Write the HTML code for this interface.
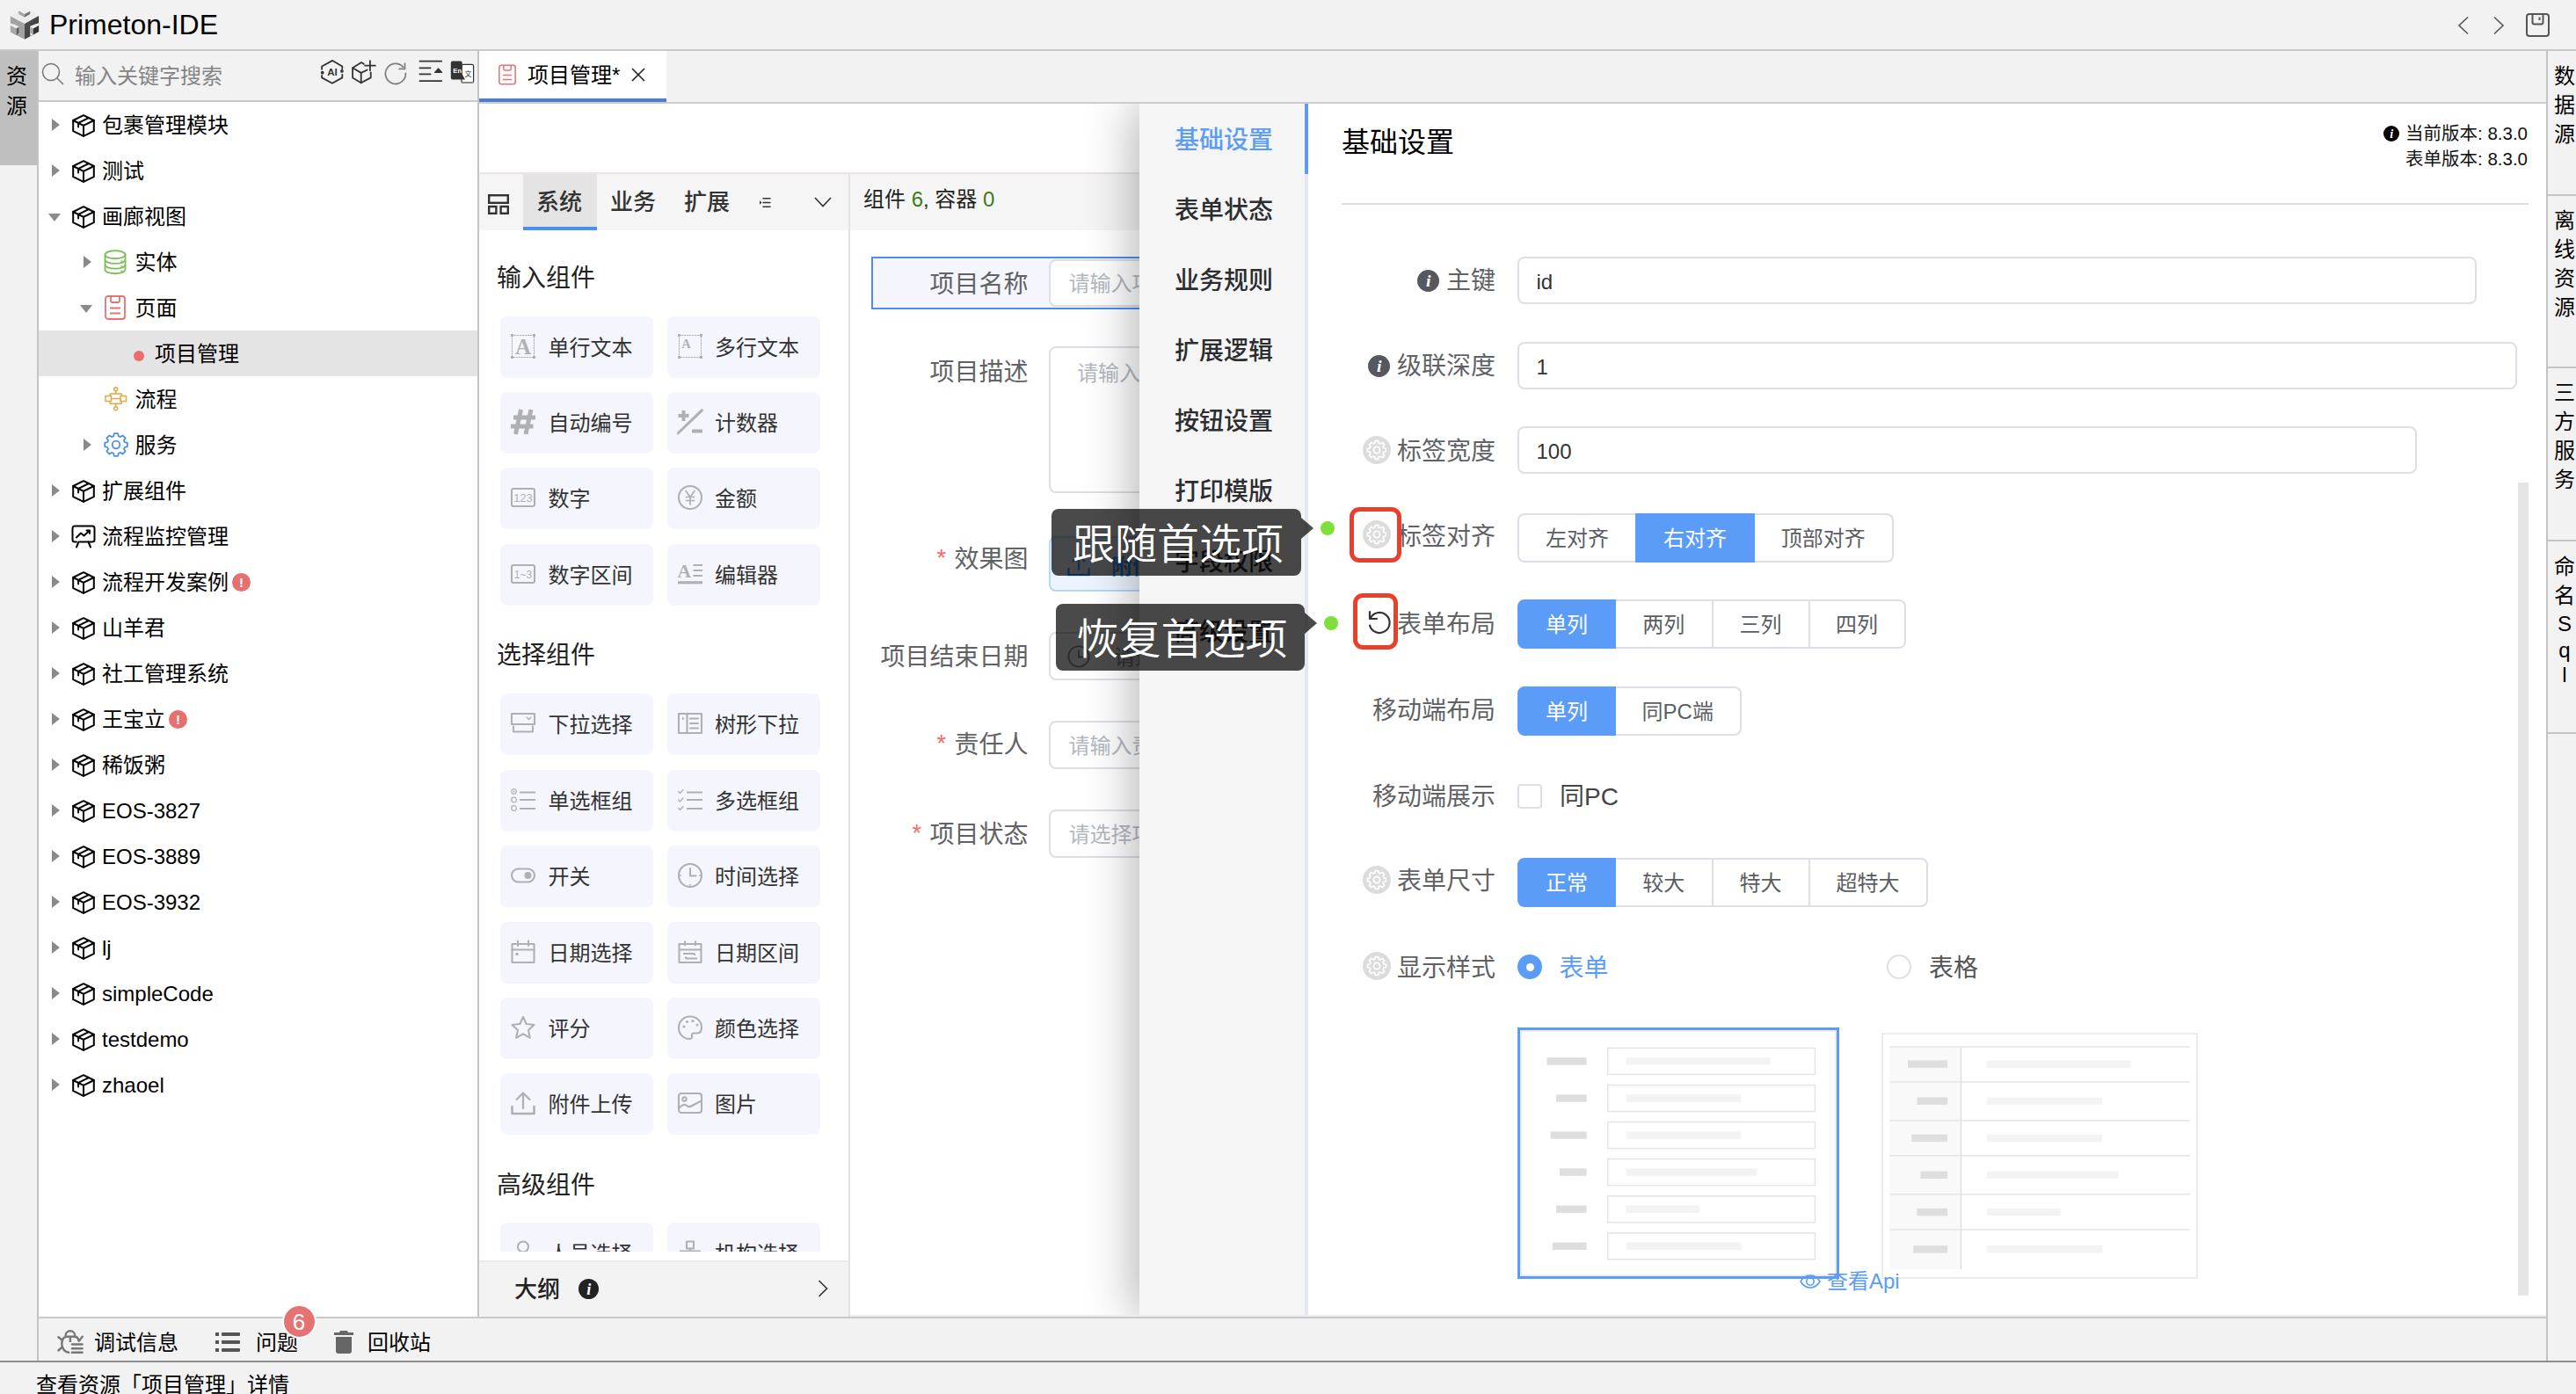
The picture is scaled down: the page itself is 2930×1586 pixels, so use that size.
<!DOCTYPE html>
<html lang="zh-CN"><head><meta charset="utf-8"><title>Primeton-IDE</title>
<style>
*{box-sizing:border-box;margin:0;padding:0}
html,body{width:2930px;height:1586px;overflow:hidden;background:#f2f2f2}
body{font-family:"Liberation Sans","Noto Sans CJK SC",sans-serif;color:#000;position:relative;font-size:24px}
.abs{position:absolute}
svg{display:block;overflow:visible}
.t{position:absolute;white-space:nowrap}
/* tree */
.row{position:absolute;left:44px;width:499px;height:52px}
.row.sel{background:#e4e4e4}
.row .tx{position:absolute;top:1px;line-height:52px;font-size:24px;white-space:nowrap}
.arr{position:absolute;width:0;height:0}
.arr.r{border-left:9px solid #8a8a8a;border-top:7px solid transparent;border-bottom:7px solid transparent;top:19px}
.arr.d{border-top:9px solid #8a8a8a;border-left:7px solid transparent;border-right:7px solid transparent;top:23px}
.ic{position:absolute}
.err{position:absolute;top:15.500px;width:21px;height:21px;border-radius:50%;background:#e5706e;color:#fff;font-size:15px;font-weight:bold;line-height:21px;text-align:center}
/* palette cards */
.card{position:absolute;width:174px;height:70px;background:#f5f6fd;border-radius:8px}
.card .tx{position:absolute;left:54.500px;top:1px;line-height:70px;font-size:24px;color:#333;white-space:nowrap}
.card svg{position:absolute;left:12px;top:20px}
.gh{position:absolute;left:566px;font-size:28px;line-height:40px;color:#222;white-space:nowrap}
/* canvas form */
.fl{position:absolute;font-size:28px;color:#606266;line-height:40px;white-space:nowrap;text-align:right;width:300px;left:869.500px}
.fl b{color:#f56c6c;font-weight:normal;margin-right:9.500px;font-size:27px;position:relative;top:-1.500px}
.fi{position:absolute;left:1193px;width:400px;border:2px solid #dcdfe6;border-radius:8px;background:#fff;font-size:24px;color:#b4b8bf;padding-left:20.500px;white-space:nowrap}
/* settings */
.nav{position:absolute;left:1298px;width:188px;text-align:center;font-size:28px;line-height:40px;color:#2c2d30;font-weight:500;white-space:nowrap}
.sl{position:absolute;font-size:28px;color:#606266;line-height:40px;white-space:nowrap;text-align:right;width:300px;left:1401px}
.si{position:absolute;left:1726px;height:54px;border:2px solid #dcdfe6;border-radius:8px;background:#fff;font-size:24px;line-height:54px;color:#333;padding-left:19.500px}
.rg{position:absolute;left:1726px;display:flex}
.rg div{height:55.500px;line-height:53.500px;font-size:24px;color:#5a5d63;text-align:center;border:2px solid #dcdfe6;border-left-width:0;background:#fff}
.rg div:first-child{border-left-width:2px;border-radius:8px 0 0 8px}
.rg div:last-child{border-radius:0 8px 8px 0}
.rg div.on{background:#5b9cf8;color:#fff;border-color:#5b9cf8;box-shadow:-2px 0 0 0 #5b9cf8}
.rg div.on:first-child{box-shadow:none}
.gear{position:absolute;width:32px;height:32px;border-radius:50%;background:#dcdcdc}
.tip{position:absolute;background:rgba(0,0,0,.71);color:#fff;font-size:48px;font-weight:350;border-radius:8px;white-space:nowrap;text-align:center;padding-left:4px}
.tip i{position:absolute;right:-14px;width:0;height:0;border-left:14px solid rgba(0,0,0,.71);border-top:12px solid transparent;border-bottom:12px solid transparent}
.dot{position:absolute;width:16px;height:16px;border-radius:50%;background:#7ee03c}
.rr{position:absolute;border:5px solid #e8402a;border-radius:11px}
/* right bar */
.rb{position:absolute;left:2900.500px;width:33px;text-align:center;font-size:24px;line-height:33px}
.rsep{position:absolute;left:2898px;width:32px;height:2px;background:#c4c4c4}
</style></head>
<body>
<div class="abs" style="left:0;top:0;width:2930px;height:58px;background:#f2f2f2;border-bottom:2px solid #c9c9c9"></div>
<svg class="abs" style="left:0;top:0" width="60" height="56" viewBox="0 0 60 56">
<defs><linearGradient id="lg1" x1="0" y1="0" x2="1" y2="1"><stop offset="0" stop-color="#5a5a5a"/><stop offset="1" stop-color="#2e2e2e"/></linearGradient></defs>
<polygon points="11.9,18.4 28.0,9.1 44.1,17.9 28.0,27.0" fill="#ececec"/>
<polygon points="11.9,18.4 28.0,27.0 28.0,44.8 11.9,36.4" fill="#a2a2a2"/>
<polygon points="28.0,27.0 44.1,17.9 44.1,35.9 28.0,44.8" fill="url(#lg1)"/>
<polygon points="21.2,12.1 28.0,8.9 34.3,12.8 28.0,16.1" fill="#f0f0f0"/>
<polygon points="21.2,12.2 28.0,15.9 28.0,19.8 21.2,15.9" fill="#a6a6a6"/>
<polygon points="28.0,15.9 34.3,12.8 34.3,16.1 28.0,19.8" fill="#757575"/>
<polygon points="11.7,26.6 21.9,30.5 21.9,38.7 11.7,36.8" fill="#f2f2f2"/>
<polygon points="11.9,29.1 15.4,27.3 21.7,30.5 18.6,32.4" fill="#ececec"/>
<polygon points="11.9,29.1 18.6,32.4 18.6,39.9 11.9,36.4" fill="#a8a8a8"/>
<polygon points="18.6,32.4 21.7,30.5 21.7,37.8 18.6,39.9" fill="#5c5c5c"/>
<polygon points="34.3,29.8 44.3,26.1 44.3,36.1 34.3,41.0" fill="#f2f2f2"/>
<polygon points="34.5,30.5 40.6,27.5 44.1,28.9 37.8,32.4" fill="#f0f0f0"/>
<polygon points="34.5,30.5 37.8,32.4 37.8,39.4 34.5,37.5" fill="#a8a8a8"/>
<polygon points="37.8,32.4 44.1,28.9 44.1,35.9 37.8,39.4" fill="#333"/>
</svg>
<div class="t" style="left:56px;top:8px;font-size:32px;line-height:40px;color:#000">Primeton-IDE</div>
<svg class="abs" style="left:2794px;top:18px" width="16" height="22" viewBox="0 0 16 22" fill="none" stroke="#555" stroke-width="1.6"><path d="M13 1.5 3 11l10 9.500"/></svg>
<svg class="abs" style="left:2834px;top:18px" width="16" height="22" viewBox="0 0 16 22" fill="none" stroke="#555" stroke-width="1.6"><path d="M3 1.500 13 11 3 20.500"/></svg>
<svg class="abs" style="left:2873px;top:15px" width="27" height="27" viewBox="0 0 27 27" fill="none" stroke="#555" stroke-width="2" stroke-linejoin="round"><rect x="1" y="1" width="25" height="25" rx="3"/><path d="M7.500 1V10.500a2 2 0 0 0 2 2h8a2 2 0 0 0 2-2V1"/><path d="M15.500 4.500V8"/></svg>
<div class="abs" style="left:0;top:58px;width:42px;height:130px;background:#bfbfbf"></div>
<div class="abs" style="left:42px;top:58px;width:2px;height:1490px;background:#c4c4c4"></div>
<div class="t" style="left:7px;top:70px;width:24px;font-size:24px;line-height:33.5px;white-space:normal">资源</div>
<div class="abs" style="left:44px;top:58px;width:499px;height:58px;background:#f2f2f2;border-bottom:2px solid #c9c9c9"></div>
<svg class="abs" style="left:47px;top:71px" width="26" height="26" viewBox="0 0 26 26" fill="none" stroke="#777" stroke-width="1.5"><circle cx="11" cy="11" r="9.500"/><path d="M18 18 25 25"/></svg>
<div class="t" style="left:85px;top:67px;font-size:24px;line-height:40px;color:#858585">输入关键字搜索</div>
<svg class="abs" style="left:355px;top:60px" width="190" height="52" viewBox="355 60 190 52" fill="none" stroke="#333" stroke-width="1.800" stroke-linecap="round" stroke-linejoin="round">
<path d="M389.300 78.300V75.500L378.200 68.900 366.100 75.500V78.800M366.100 85.800V88.400L377.900 94.700 389.300 88.400V84.800"/>
<circle cx="388.900" cy="80.900" r="1.900" fill="#333" stroke="none"/><circle cx="366.700" cy="82.700" r="1.900" fill="#333" stroke="none"/>
<text x="377.900" y="85.600" text-anchor="middle" font-family="Liberation Sans,sans-serif" font-weight="bold" font-size="11.500" fill="#333" stroke="none">AI</text>
<path d="M414 72.900 411 71.100 401.100 77.300V88.400L410.700 94.300 421.700 88.400V82.300"/><path d="M401.100 77.300 410.700 82.900 417.700 79.500M410.700 82.900V94.300"/><path d="M420.900 69.200V80.300M415.100 74.700H426.900"/>
<path d="M461.400 83.400A11.500 11.500 0 1 1 458.600 76.400" stroke="#808080"/><path d="M460.500 72.500V78.400H454.200" stroke="#808080"/>
<path d="M476.700 69.600H502.900M476.700 77.300H490.300M476.700 84.300H490.300M476.700 92.100H502.900" stroke-linecap="butt"/>
<path d="M494.600 82.300 498.600 77.900 502.600 82.300Z" fill="#333" stroke-width="1.200"/>
<rect x="525" y="73.300" width="13.600" height="20.600" rx="2" fill="#fff" stroke-width="1.200"/><path d="M525 93.700H538" stroke="#888" stroke-width="1.400"/>
<text x="532.500" y="86.600" text-anchor="middle" font-family="Noto Sans CJK SC,sans-serif" font-size="8" fill="#333" stroke="none">文</text>
<path d="M514.800 69.600H523.700a2 2 0 0 1 2 2V84.500L529 90.600H514.800a2 2 0 0 1-2-2V71.600a2 2 0 0 1 2-2Z" fill="#333" stroke="none"/>
<text x="520.200" y="83.400" text-anchor="middle" font-family="Liberation Sans,sans-serif" font-weight="bold" font-size="7.600" fill="#fff" stroke="none">En</text>
</svg>
<div class="abs" style="left:44px;top:116px;width:499px;height:1382px;background:#fff"></div>
<div class="abs" style="left:543px;top:58px;width:2px;height:1441px;background:#c4c4c4"></div>
<div class="row" style="top:116px"><span class="arr r" style="left:15px"></span><svg class="ic" style="left:38px;top:14px" width="26" height="26" viewBox="0 0 26 26" fill="none" stroke="#000" stroke-width="2" stroke-linejoin="round" stroke-linecap="round"><path d="M13 1.200 24.800 7V19.200L13 24.800 1.200 19.200V7Z"/><path d="M1.200 7 13 12.800 24.800 7M13 12.800V24.800"/><path d="M18.900 4.100 7.100 9.900V14.600"/></svg><span class="tx" style="left:72.0px" id="tr0">包裹管理模块</span></div>
<div class="row" style="top:168px"><span class="arr r" style="left:15px"></span><svg class="ic" style="left:38px;top:14px" width="26" height="26" viewBox="0 0 26 26" fill="none" stroke="#000" stroke-width="2" stroke-linejoin="round" stroke-linecap="round"><path d="M13 1.200 24.800 7V19.200L13 24.800 1.200 19.200V7Z"/><path d="M1.200 7 13 12.800 24.800 7M13 12.800V24.800"/><path d="M18.900 4.100 7.100 9.900V14.600"/></svg><span class="tx" style="left:72.0px" id="tr1">测试</span></div>
<div class="row" style="top:220px"><span class="arr d" style="left:11px"></span><svg class="ic" style="left:38px;top:14px" width="26" height="26" viewBox="0 0 26 26" fill="none" stroke="#000" stroke-width="2" stroke-linejoin="round" stroke-linecap="round"><path d="M13 1.200 24.800 7V19.200L13 24.800 1.200 19.200V7Z"/><path d="M1.200 7 13 12.800 24.800 7M13 12.800V24.800"/><path d="M18.900 4.100 7.100 9.900V14.600"/></svg><span class="tx" style="left:72.0px" id="tr2">画廊视图</span></div>
<div class="row" style="top:272px"><span class="arr r" style="left:51px"></span><svg class="ic" style="left:74px;top:12px" width="26" height="28.500" viewBox="0 0 26 28" fill="none" stroke="#7cbf5a" stroke-width="1.800"><ellipse cx="13" cy="5.500" rx="11.500" ry="4.500"/><path d="M1.500 5.500V22.500c0 2.500 5.100 4.500 11.500 4.500s11.500-2 11.500-4.500V5.500"/><path d="M1.500 11.200c0 2.500 5.100 4.500 11.500 4.500s11.500-2 11.500-4.500M1.500 16.900c0 2.500 5.100 4.500 11.500 4.500s11.500-2 11.500-4.500"/><path d="M19.500 12.800h2M19.500 18.500h2M19.500 24h2" stroke-width="1.400"/></svg><span class="tx" style="left:109.5px" id="tr3">实体</span></div>
<div class="row" style="top:324px"><span class="arr d" style="left:47px"></span><svg class="ic" style="left:75px;top:12px" width="24" height="28" viewBox="0 0 24 28" fill="none" stroke="#e87272" stroke-width="1.800" stroke-linejoin="round"><rect x="1" y="1" width="22" height="26" rx="3"/><path d="M7 1V6.500a1.500 1.500 0 0 0 1.500 1.500h7A1.500 1.500 0 0 0 17 6.500V1"/><path d="M6 14.500H18M6 20.500H18"/></svg><span class="tx" style="left:109.5px" id="tr4">页面</span></div>
<div class="row sel" style="top:376px"><span class="abs" style="left:108px;top:23px;width:12px;height:12px;border-radius:50%;background:#e86f6d"></span><span class="tx" style="left:132px" id="tr5">项目管理</span></div>
<div class="row" style="top:428px"><svg class="ic" style="left:75.3px;top:11.700px" width="26" height="28" viewBox="0 0 26 28" fill="none" stroke="#e5a646" stroke-width="1.500"><circle cx="12.700" cy="2.700" r="2"/><circle cx="12.700" cy="24.700" r="2"/><rect x="1" y="10.500" width="6.500" height="6"/><rect x="18" y="10.500" width="6.500" height="6"/><path d="M12.700 4.700V8M6.300 10.500V8H19.200V10.500M7.500 13.500H18M6.300 16.500V19.200H19.200V16.500M12.700 19.200V22.700"/></svg><span class="tx" style="left:109.5px" id="tr6">流程</span></div>
<div class="row" style="top:480px"><span class="arr r" style="left:51px"></span><svg class="ic" style="left:74px;top:12px" width="28" height="28" viewBox="0 0 28 28" fill="none" stroke="#4a90f0" stroke-width="1.800" stroke-linejoin="round"><path d="M11.23 4.18L11.87 1.18L16.13 1.18L16.77 4.18L18.98 5.10L21.56 3.42L24.58 6.44L22.90 9.02L23.82 11.23L26.82 11.87L26.82 16.13L23.82 16.77L22.90 18.98L24.58 21.56L21.56 24.58L18.98 22.90L16.77 23.82L16.13 26.82L11.87 26.82L11.23 23.82L9.02 22.90L6.44 24.58L3.42 21.56L5.10 18.98L4.18 16.77L1.18 16.13L1.18 11.87L4.18 11.23L5.10 9.02L3.42 6.44L6.44 3.42L9.02 5.10Z" stroke-width="1.800"/><circle cx="14" cy="14" r="4.300"/></svg><span class="tx" style="left:109.5px" id="tr7">服务</span></div>
<div class="row" style="top:532px"><span class="arr r" style="left:15px"></span><svg class="ic" style="left:38px;top:14px" width="26" height="26" viewBox="0 0 26 26" fill="none" stroke="#000" stroke-width="2" stroke-linejoin="round" stroke-linecap="round"><path d="M13 1.200 24.800 7V19.200L13 24.800 1.200 19.200V7Z"/><path d="M1.200 7 13 12.800 24.800 7M13 12.800V24.800"/><path d="M18.900 4.100 7.100 9.900V14.600"/></svg><span class="tx" style="left:72.0px" id="tr8">扩展组件</span></div>
<div class="row" style="top:584px"><span class="arr r" style="left:15px"></span><svg class="ic" style="left:37px;top:13px" width="28" height="27" viewBox="0 0 28 27" fill="none" stroke="#000" stroke-width="2" stroke-linejoin="round" stroke-linecap="round"><path d="M6 19.500H4a2.500 2.500 0 0 1-2.500-2.500V4A2.500 2.500 0 0 1 4 1.500H24A2.500 2.500 0 0 1 26.500 4V17A2.500 2.500 0 0 1 24 19.500H10"/><path d="M6 14.500 11 9.500 14.500 12.500 21 6.500M21 6.500h-3.500M21 6.500V10"/><path d="M8.500 19.500 6 25.500M19.500 19.500 22 25.500"/></svg><span class="tx" style="left:72.0px" id="tr9">流程监控管理</span></div>
<div class="row" style="top:636px"><span class="arr r" style="left:15px"></span><svg class="ic" style="left:38px;top:14px" width="26" height="26" viewBox="0 0 26 26" fill="none" stroke="#000" stroke-width="2" stroke-linejoin="round" stroke-linecap="round"><path d="M13 1.200 24.800 7V19.200L13 24.800 1.200 19.200V7Z"/><path d="M1.200 7 13 12.800 24.800 7M13 12.800V24.800"/><path d="M18.900 4.100 7.100 9.900V14.600"/></svg><span class="tx" style="left:72.0px" id="tr10">流程开发案例</span><span class="err" style="left:220px">!</span></div>
<div class="row" style="top:688px"><span class="arr r" style="left:15px"></span><svg class="ic" style="left:38px;top:14px" width="26" height="26" viewBox="0 0 26 26" fill="none" stroke="#000" stroke-width="2" stroke-linejoin="round" stroke-linecap="round"><path d="M13 1.200 24.800 7V19.200L13 24.800 1.200 19.200V7Z"/><path d="M1.200 7 13 12.800 24.800 7M13 12.800V24.800"/><path d="M18.900 4.100 7.100 9.900V14.600"/></svg><span class="tx" style="left:72.0px" id="tr11">山羊君</span></div>
<div class="row" style="top:740px"><span class="arr r" style="left:15px"></span><svg class="ic" style="left:38px;top:14px" width="26" height="26" viewBox="0 0 26 26" fill="none" stroke="#000" stroke-width="2" stroke-linejoin="round" stroke-linecap="round"><path d="M13 1.200 24.800 7V19.200L13 24.800 1.200 19.200V7Z"/><path d="M1.200 7 13 12.800 24.800 7M13 12.800V24.800"/><path d="M18.900 4.100 7.100 9.900V14.600"/></svg><span class="tx" style="left:72.0px" id="tr12">社工管理系统</span></div>
<div class="row" style="top:792px"><span class="arr r" style="left:15px"></span><svg class="ic" style="left:38px;top:14px" width="26" height="26" viewBox="0 0 26 26" fill="none" stroke="#000" stroke-width="2" stroke-linejoin="round" stroke-linecap="round"><path d="M13 1.200 24.800 7V19.200L13 24.800 1.200 19.200V7Z"/><path d="M1.200 7 13 12.800 24.800 7M13 12.800V24.800"/><path d="M18.900 4.100 7.100 9.900V14.600"/></svg><span class="tx" style="left:72.0px" id="tr13">王宝立</span><span class="err" style="left:148px">!</span></div>
<div class="row" style="top:844px"><span class="arr r" style="left:15px"></span><svg class="ic" style="left:38px;top:14px" width="26" height="26" viewBox="0 0 26 26" fill="none" stroke="#000" stroke-width="2" stroke-linejoin="round" stroke-linecap="round"><path d="M13 1.200 24.800 7V19.200L13 24.800 1.200 19.200V7Z"/><path d="M1.200 7 13 12.800 24.800 7M13 12.800V24.800"/><path d="M18.900 4.100 7.100 9.900V14.600"/></svg><span class="tx" style="left:72.0px" id="tr14">稀饭粥</span></div>
<div class="row" style="top:896px"><span class="arr r" style="left:15px"></span><svg class="ic" style="left:38px;top:14px" width="26" height="26" viewBox="0 0 26 26" fill="none" stroke="#000" stroke-width="2" stroke-linejoin="round" stroke-linecap="round"><path d="M13 1.200 24.800 7V19.200L13 24.800 1.200 19.200V7Z"/><path d="M1.200 7 13 12.800 24.800 7M13 12.800V24.800"/><path d="M18.900 4.100 7.100 9.900V14.600"/></svg><span class="tx" style="left:72.0px" id="tr15">EOS-3827</span></div>
<div class="row" style="top:948px"><span class="arr r" style="left:15px"></span><svg class="ic" style="left:38px;top:14px" width="26" height="26" viewBox="0 0 26 26" fill="none" stroke="#000" stroke-width="2" stroke-linejoin="round" stroke-linecap="round"><path d="M13 1.200 24.800 7V19.200L13 24.800 1.200 19.200V7Z"/><path d="M1.200 7 13 12.800 24.800 7M13 12.800V24.800"/><path d="M18.900 4.100 7.100 9.900V14.600"/></svg><span class="tx" style="left:72.0px" id="tr16">EOS-3889</span></div>
<div class="row" style="top:1000px"><span class="arr r" style="left:15px"></span><svg class="ic" style="left:38px;top:14px" width="26" height="26" viewBox="0 0 26 26" fill="none" stroke="#000" stroke-width="2" stroke-linejoin="round" stroke-linecap="round"><path d="M13 1.200 24.800 7V19.200L13 24.800 1.200 19.200V7Z"/><path d="M1.200 7 13 12.800 24.800 7M13 12.800V24.800"/><path d="M18.900 4.100 7.100 9.900V14.600"/></svg><span class="tx" style="left:72.0px" id="tr17">EOS-3932</span></div>
<div class="row" style="top:1052px"><span class="arr r" style="left:15px"></span><svg class="ic" style="left:38px;top:14px" width="26" height="26" viewBox="0 0 26 26" fill="none" stroke="#000" stroke-width="2" stroke-linejoin="round" stroke-linecap="round"><path d="M13 1.200 24.800 7V19.200L13 24.800 1.200 19.200V7Z"/><path d="M1.200 7 13 12.800 24.800 7M13 12.800V24.800"/><path d="M18.900 4.100 7.100 9.900V14.600"/></svg><span class="tx" style="left:72.0px" id="tr18">lj</span></div>
<div class="row" style="top:1104px"><span class="arr r" style="left:15px"></span><svg class="ic" style="left:38px;top:14px" width="26" height="26" viewBox="0 0 26 26" fill="none" stroke="#000" stroke-width="2" stroke-linejoin="round" stroke-linecap="round"><path d="M13 1.200 24.800 7V19.200L13 24.800 1.200 19.200V7Z"/><path d="M1.200 7 13 12.800 24.800 7M13 12.800V24.800"/><path d="M18.900 4.100 7.100 9.900V14.600"/></svg><span class="tx" style="left:72.0px" id="tr19">simpleCode</span></div>
<div class="row" style="top:1156px"><span class="arr r" style="left:15px"></span><svg class="ic" style="left:38px;top:14px" width="26" height="26" viewBox="0 0 26 26" fill="none" stroke="#000" stroke-width="2" stroke-linejoin="round" stroke-linecap="round"><path d="M13 1.200 24.800 7V19.200L13 24.800 1.200 19.200V7Z"/><path d="M1.200 7 13 12.800 24.800 7M13 12.800V24.800"/><path d="M18.900 4.100 7.100 9.900V14.600"/></svg><span class="tx" style="left:72.0px" id="tr20">testdemo</span></div>
<div class="row" style="top:1208px"><span class="arr r" style="left:15px"></span><svg class="ic" style="left:38px;top:14px" width="26" height="26" viewBox="0 0 26 26" fill="none" stroke="#000" stroke-width="2" stroke-linejoin="round" stroke-linecap="round"><path d="M13 1.200 24.800 7V19.200L13 24.800 1.200 19.200V7Z"/><path d="M1.200 7 13 12.800 24.800 7M13 12.800V24.800"/><path d="M18.900 4.100 7.100 9.900V14.600"/></svg><span class="tx" style="left:72.0px" id="tr21">zhaoel</span></div>
<div class="abs" style="left:44px;top:1498px;width:2853px;height:2px;background:#c9c9c9"></div>
<div class="abs" style="left:0;top:1548px;width:2930px;height:2px;background:#8e8e8e"></div>
<svg class="abs" style="left:65px;top:1513px" width="30" height="28" viewBox="0 0 30 28" fill="none" stroke="#777" stroke-width="2.400" stroke-linecap="round" stroke-linejoin="round"><path d="M9.600 6.500A5.300 5.300 0 0 1 20.200 6.500"/><path d="M24.500 12.300C24 9.500 22 7.800 19.500 7.800H10.300C7 8.500 5.300 12 5.300 16.200 5.300 21.500 9 25.500 13.200 25.800"/><path d="M14.900 7.800V14" stroke-linecap="butt"/><path d="M1.400 8.300 5.900 11.800M1.400 23.500 5.900 19.500M28.700 7.700 25 12.600"/><path d="M17 16.500H28.500M17 21.200H28.500M17 25.800H28.500" stroke-width="2.600"/></svg>
<div class="t" style="left:107px;top:1508px;font-size:24px;line-height:40px;color:#000">调试信息</div>
<svg class="abs" style="left:245px;top:1516px" width="28" height="22" viewBox="0 0 28 22" fill="#555"><rect x="0" y="0" width="4" height="4"/><rect x="7" y="0" width="21" height="4" rx="1"/><rect x="0" y="9" width="4" height="4"/><rect x="7" y="9" width="21" height="4" rx="1"/><rect x="0" y="18" width="4" height="4"/><rect x="7" y="18" width="21" height="4" rx="1"/></svg>
<div class="t" style="left:291px;top:1508px;font-size:24px;line-height:40px;color:#000">问题</div>
<div class="abs" style="left:320.500px;top:1484px;width:39px;height:39px;border-radius:50%;background:#e57373;border:2px solid #fff;color:#fff;font-size:26px;line-height:36px;text-align:center">6</div>
<svg class="abs" style="left:379px;top:1514px" width="24" height="26" viewBox="0 0 24 26" fill="#666"><path d="M8 0h8l1 2h6v3H1V2h6Z"/><path d="M3 7h18v16a3 3 0 0 1-3 3H6a3 3 0 0 1-3-3Z"/></svg>
<div class="t" style="left:418px;top:1508px;font-size:24px;line-height:40px;color:#000">回收站</div>
<div class="t" style="left:41px;top:1556px;font-size:24px;line-height:40px;color:#000">查看资源「项目管理」详情</div>
<div class="abs" style="left:545px;top:116px;width:2352px;height:2px;background:#cdcdcd"></div>
<div class="abs" style="left:545px;top:58px;width:213px;height:58px;background:#fff;border-bottom:4px solid #4c7fc8"></div>
<svg class="abs" style="left:567px;top:73px" width="20" height="24" viewBox="0 0 24 28" fill="none" stroke="#e87272" stroke-width="1.800" stroke-linejoin="round"><rect x="1" y="1" width="22" height="26" rx="3"/><path d="M7 1V6.500a1.500 1.500 0 0 0 1.500 1.500h7A1.500 1.500 0 0 0 17 6.500V1"/><path d="M6 14.500H18M6 20.500H18"/></svg>
<div class="t" style="left:600px;top:66px;font-size:24px;line-height:40px;color:#000">项目管理*</div>
<svg class="abs" style="left:718px;top:77px" width="16" height="16" viewBox="0 0 16 16" fill="none" stroke="#222" stroke-width="1.600"><path d="M1 1 15 15M15 1 1 15"/></svg>
<div class="abs" style="left:545px;top:118px;width:2352px;height:1380px;background:#fff"></div>
<div class="abs" style="left:545px;top:196px;width:760px;height:66px;background:#f5f5f5;border-top:2px solid #ece4e4"></div>
<div class="abs" style="left:965px;top:198px;width:2px;height:1300px;background:#e4e4e4"></div>
<svg class="abs" style="left:555px;top:220.500px" width="24" height="23" viewBox="0 0 24 23" fill="none" stroke="#333" stroke-width="2.400"><rect x="1.200" y="1.200" width="21.600" height="8.600"/><rect x="1.200" y="14" width="8.200" height="7.800"/><rect x="14.600" y="14" width="8.200" height="7.800"/></svg>
<div class="abs" style="left:595px;top:198px;width:84px;height:64px;background:#e4e4e4;border-bottom:4px solid #4a8ff0"></div>
<div class="t" style="left:610px;top:210px;font-size:26px;line-height:40px;color:#333;font-weight:500">系统</div>
<div class="t" style="left:694px;top:210px;font-size:26px;line-height:40px;color:#333;font-weight:500">业务</div>
<div class="t" style="left:778px;top:210px;font-size:26px;line-height:40px;color:#333;font-weight:500">扩展</div>
<svg class="abs" style="left:864px;top:224.500px" width="13" height="11" viewBox="0 0 13 11" fill="none" stroke="#333" stroke-width="1.500"><path d="M3.500 0.800H12.500M3.500 5.500H12.500M3.500 10.200H12.500"/><path d="M0 3.300 2.500 5.500 0 7.700Z" fill="#333" stroke="none"/></svg>
<svg class="abs" style="left:926px;top:224px" width="20" height="12" viewBox="0 0 20 12" fill="none" stroke="#333" stroke-width="1.600"><path d="M1 1 10 10.500 19 1"/></svg>
<div class="t" style="left:982px;top:207px;font-size:24px;line-height:40px;color:#222">组件 <span style="color:#3a7d18">6</span>, 容器 <span style="color:#3a7d18">0</span></div>
<div class="abs" style="left:545px;top:264px;width:420px;height:1160px;overflow:hidden">
<div class="gh" style="left:20px;top:33px">输入组件</div>
<div class="card" style="left:24px;top:96.0px"><svg width="28" height="28" viewBox="0 0 28 28" fill="none" stroke="#b0b0b3" stroke-width="2.100" stroke-linejoin="round" stroke-linecap="round"><rect x="1.500" y="1.500" width="25" height="25" stroke-dasharray="1.500 1.500" stroke-width="1"/><rect x="0" y="0" width="3" height="3" fill="#b0b0b3" stroke="none"/><rect x="25" y="0" width="3" height="3" fill="#b0b0b3" stroke="none"/><rect x="0" y="25" width="3" height="3" fill="#b0b0b3" stroke="none"/><rect x="25" y="25" width="3" height="3" fill="#b0b0b3" stroke="none"/><text x="14" y="22.500" text-anchor="middle" font-family="Liberation Serif,serif" font-weight="bold" font-size="25" fill="#b0b0b3" stroke="none">A</text></svg><span class="tx">单行文本</span></div><div class="card" style="left:213.500px;top:96.0px"><svg width="28" height="28" viewBox="0 0 28 28" fill="none" stroke="#b0b0b3" stroke-width="2.100" stroke-linejoin="round" stroke-linecap="round"><rect x="1.500" y="1.500" width="25" height="25" stroke-dasharray="1.500 1.500" stroke-width="1"/><rect x="0" y="0" width="3" height="3" fill="#b0b0b3" stroke="none"/><rect x="25" y="0" width="3" height="3" fill="#b0b0b3" stroke="none"/><rect x="0" y="25" width="3" height="3" fill="#b0b0b3" stroke="none"/><rect x="25" y="25" width="3" height="3" fill="#b0b0b3" stroke="none"/><text x="9.500" y="15.500" text-anchor="middle" font-family="Liberation Serif,serif" font-weight="bold" font-size="14.500" fill="#b0b0b3" stroke="none">A</text></svg><span class="tx">多行文本</span></div>
<div class="card" style="left:24px;top:182.0px"><svg width="28" height="28" viewBox="0 0 28 28" fill="none" stroke="#b0b0b3" stroke-width="2.100" stroke-linejoin="round" stroke-linecap="round"><path d="M11.500 0 5.500 28M23 0 17 28M3 9H28M0 19H25.500" stroke-width="5" stroke-linecap="butt"/></svg><span class="tx">自动编号</span></div><div class="card" style="left:213.500px;top:182.0px"><svg width="28" height="28" viewBox="0 0 28 28" fill="none" stroke="#b0b0b3" stroke-width="2.100" stroke-linejoin="round" stroke-linecap="round"><path d="M0 28 28 1.500V0H27L0 26Z" fill="#b0b0b3" stroke="#b0b0b3" stroke-width="1.500"/><path d="M6.500 1V13M0.500 7H12.500M16 24.500H28" stroke-width="4" stroke-linecap="butt"/></svg><span class="tx">计数器</span></div>
<div class="card" style="left:24px;top:268.0px"><svg width="28" height="28" viewBox="0 0 28 28" fill="none" stroke="#b0b0b3" stroke-width="2.100" stroke-linejoin="round" stroke-linecap="round"><rect x="1" y="4" width="26" height="20" rx="2"/><text x="14" y="19" text-anchor="middle" font-family="Liberation Sans,sans-serif" font-size="13" fill="#b0b0b3" stroke="none">123</text></svg><span class="tx">数字</span></div><div class="card" style="left:213.500px;top:268.0px"><svg width="28" height="28" viewBox="0 0 28 28" fill="none" stroke="#b0b0b3" stroke-width="2.100" stroke-linejoin="round" stroke-linecap="round"><circle cx="14" cy="14" r="13"/><path d="M9 6.500 14 13.500 19 6.500M14 13.500V22M9.500 13.500H18.500M9.500 17.500H18.500" stroke-width="1.700"/></svg><span class="tx">金额</span></div>
<div class="card" style="left:24px;top:355.0px"><svg width="28" height="28" viewBox="0 0 28 28" fill="none" stroke="#b0b0b3" stroke-width="2.100" stroke-linejoin="round" stroke-linecap="round"><rect x="1" y="4" width="26" height="20" rx="2"/><text x="14" y="18.500" text-anchor="middle" font-family="Liberation Sans,sans-serif" font-size="12" fill="#b0b0b3" stroke="none">1~3</text></svg><span class="tx">数字区间</span></div><div class="card" style="left:213.500px;top:355.0px"><svg width="28" height="28" viewBox="0 0 28 28" fill="none" stroke="#b0b0b3" stroke-width="2.100" stroke-linejoin="round" stroke-linecap="round"><text x="7.300" y="18" text-anchor="middle" font-family="Liberation Serif,serif" font-weight="bold" font-size="21.500" fill="#b0b0b3" stroke="none">A</text><path d="M17.500 4H28M17.500 10H28M17.500 16H28" stroke-width="2" stroke-linecap="butt"/><path d="M0 23.800H28" stroke-width="3.200" stroke-linecap="butt"/></svg><span class="tx">编辑器</span></div>
<div class="gh" style="left:20px;top:462px">选择组件</div>
<div class="card" style="left:24px;top:525.0px"><svg width="28" height="28" viewBox="0 0 28 28" fill="none" stroke="#b0b0b3" stroke-width="2.100" stroke-linejoin="round" stroke-linecap="round"><rect x="1" y="3" width="26" height="12"/><path d="M18 7 20.500 9.500 23 7" stroke-width="1.300"/><path d="M3 17.500V23.500H25V17.500" stroke-width="2"/></svg><span class="tx">下拉选择</span></div><div class="card" style="left:213.500px;top:525.0px"><svg width="28" height="28" viewBox="0 0 28 28" fill="none" stroke="#b0b0b3" stroke-width="2.100" stroke-linejoin="round" stroke-linecap="round"><rect x="1" y="3" width="26" height="22"/><path d="M10.500 3V25M14 8.500H23M14 14H23M14 19.500H23"/><path d="M5 6.500 7.500 8.500 5 10.500Z" fill="#b0b0b3" stroke="none"/></svg><span class="tx">树形下拉</span></div>
<div class="card" style="left:24px;top:612.0px"><svg width="28" height="28" viewBox="0 0 28 28" fill="none" stroke="#b0b0b3" stroke-width="2.100" stroke-linejoin="round" stroke-linecap="round"><circle cx="3.500" cy="4.500" r="2.800" stroke-width="1.200"/><circle cx="3.500" cy="4.500" r="1" fill="#b0b0b3" stroke="none"/><circle cx="3.500" cy="14" r="2.800" stroke-width="1.200"/><circle cx="3.500" cy="23.500" r="2.800" stroke-width="1.200"/><path d="M10 5.500H28M10 14H28M10 24H28" stroke-width="1.800" stroke-linecap="butt"/></svg><span class="tx">单选框组</span></div><div class="card" style="left:213.500px;top:612.0px"><svg width="28" height="28" viewBox="0 0 28 28" fill="none" stroke="#b0b0b3" stroke-width="2.100" stroke-linejoin="round" stroke-linecap="round"><path d="M0.500 4.500 2.500 6.500 6 2.500M0.500 14 2.500 16 6 12M0.500 23.500 2.500 25.500 6 21.500" stroke-width="1.300"/><path d="M10 5.500H28M10 14H28M10 24H28" stroke-width="1.800" stroke-linecap="butt"/></svg><span class="tx">多选框组</span></div>
<div class="card" style="left:24px;top:698.0px"><svg width="28" height="28" viewBox="0 0 28 28" fill="none" stroke="#b0b0b3" stroke-width="2.100" stroke-linejoin="round" stroke-linecap="round"><rect x="1" y="6.500" width="26" height="15" rx="7.500"/><circle cx="19.500" cy="14" r="4" fill="#b0b0b3" stroke="none"/></svg><span class="tx">开关</span></div><div class="card" style="left:213.500px;top:698.0px"><svg width="28" height="28" viewBox="0 0 28 28" fill="none" stroke="#b0b0b3" stroke-width="2.100" stroke-linejoin="round" stroke-linecap="round"><circle cx="14" cy="14" r="13"/><path d="M14 6V14.500H20.500"/><path d="M14 27V24.500M1 14H3.500M27 14H24.500" stroke-width="1.400"/></svg><span class="tx">时间选择</span></div>
<div class="card" style="left:24px;top:785.0px"><svg width="28" height="28" viewBox="0 0 28 28" fill="none" stroke="#b0b0b3" stroke-width="2.100" stroke-linejoin="round" stroke-linecap="round"><rect x="1.500" y="5" width="25" height="21"/><path d="M1.500 11.500H26.500M8 1.500V7M20 1.500V7"/><rect x="5.500" y="15" width="3" height="3" fill="#b0b0b3" stroke="none"/></svg><span class="tx">日期选择</span></div><div class="card" style="left:213.500px;top:785.0px"><svg width="28" height="28" viewBox="0 0 28 28" fill="none" stroke="#b0b0b3" stroke-width="2.100" stroke-linejoin="round" stroke-linecap="round"><rect x="1.500" y="5" width="25" height="21"/><path d="M1.500 11.500H26.500M8 1.500V7M20 1.500V7M6 16H19M9 21.500H22M19 16V18M9 21.500V19.500" stroke-linecap="butt"/></svg><span class="tx">日期区间</span></div>
<div class="card" style="left:24px;top:871.0px"><svg width="28" height="28" viewBox="0 0 28 28" fill="none" stroke="#b0b0b3" stroke-width="2.100" stroke-linejoin="round" stroke-linecap="round"><path d="M14 2 17.700 10 26.500 11 20 17 21.800 25.800 14 21.400 6.200 25.800 8 17 1.500 11 10.300 10Z" stroke-width="2.100"/></svg><span class="tx">评分</span></div><div class="card" style="left:213.500px;top:871.0px"><svg width="28" height="28" viewBox="0 0 28 28" fill="none" stroke="#b0b0b3" stroke-width="2.100" stroke-linejoin="round" stroke-linecap="round"><path d="M14 1.500C6.500 1.500 1 7 1 14.500 1 21.500 6.500 27 13 27c2.500 0 3.500-1.500 3-3-.6-1.800 0-3.500 2.500-3.500H22c3 0 5-2.500 5-6.500C27 6.500 21 1.500 14 1.500Z"/><circle cx="7" cy="13" r="1.600" fill="#b0b0b3" stroke="none"/><circle cx="10.500" cy="7.500" r="1.600" fill="#b0b0b3" stroke="none"/><circle cx="17" cy="6.500" r="1.600" fill="#b0b0b3" stroke="none"/><circle cx="22" cy="11" r="1.600" fill="#b0b0b3" stroke="none"/></svg><span class="tx">颜色选择</span></div>
<div class="card" style="left:24px;top:957.0px"><svg width="28" height="28" viewBox="0 0 28 28" fill="none" stroke="#b0b0b3" stroke-width="2.100" stroke-linejoin="round" stroke-linecap="round"><path d="M1.500 18V26H26.500V18" stroke-width="2.600"/><path d="M14 20V2.500M6.500 10 14 2.500 21.500 10" stroke-width="2.200"/></svg><span class="tx">附件上传</span></div><div class="card" style="left:213.500px;top:957.0px"><svg width="28" height="28" viewBox="0 0 28 28" fill="none" stroke="#b0b0b3" stroke-width="2.100" stroke-linejoin="round" stroke-linecap="round"><rect x="1" y="3" width="26" height="22" rx="3"/><circle cx="7.500" cy="9.500" r="2.200"/><path d="M1 20c4-5 7-5 10-2.500S18 15 27 11.500"/></svg><span class="tx">图片</span></div>
<div class="gh" style="left:20px;top:1065px">高级组件</div>
<div class="card" style="left:24px;top:1127.0px"><svg width="28" height="28" viewBox="0 0 28 28" fill="none" stroke="#b0b0b3" stroke-width="2.100" stroke-linejoin="round" stroke-linecap="round"><circle cx="14" cy="7.500" r="6"/></svg><span class="tx">人员选择</span></div><div class="card" style="left:213.500px;top:1127.0px"><svg width="28" height="28" viewBox="0 0 28 28" fill="none" stroke="#b0b0b3" stroke-width="2.100" stroke-linejoin="round" stroke-linecap="round"><rect x="10" y="1.500" width="8" height="8"/><path d="M14 9.500V12.500M3 12.500H25"/></svg><span class="tx">机构选择</span></div>
</div>
<div class="abs" style="left:545px;top:1434px;width:420px;height:64px;background:#f3f3f3;border-top:2px solid #e6ebf0"></div>
<div class="t" style="left:585px;top:1447px;font-size:26px;line-height:40px;color:#222;font-weight:500">大纲</div>
<svg class="abs" style="left:658px;top:1455px" width="23" height="23" viewBox="0 0 24 24"><circle cx="12" cy="12" r="12" fill="#222"/><text x="12.300" y="18.500" text-anchor="middle" font-family="Liberation Serif,serif" font-style="italic" font-weight="bold" font-size="19" fill="#fff">i</text></svg>
<svg class="abs" style="left:930px;top:1456px" width="12" height="20" viewBox="0 0 12 20" fill="none" stroke="#333" stroke-width="1.600"><path d="M1.500 1 10.500 10 1.500 19"/></svg>
<div class="abs" style="left:991px;top:292px;width:330px;height:60px;background:#f5f6fd;border:2px solid #4a8ff0;border-right:none"></div>
<div class="fl" style="top:303.5px">项目名称</div><div class="fi" style="top:295px;height:54px;line-height:52px">请输入项目名称</div>
<div class="fl" style="top:403.500px">项目描述</div><div class="fi" style="top:394px;height:167px;line-height:58px;padding-left:30px">请输入项目描述</div>
<div class="fl" style="top:616.5px"><b>*</b>效果图</div><div class="fi" style="top:610px;height:63px;line-height:66px;background:#ecf5ff;border-color:#b3d8ff;color:#409eff;font-weight:bold;padding-left:69px">附件上传</div>
<svg class="abs" style="left:1214px;top:628.500px" width="26" height="28" viewBox="0 0 28 28" fill="none" stroke="#409eff" stroke-width="2.500"><path d="M1.500 17.500V26H26.500V17.500"/><path d="M14 20V2M6.500 9.500 14 2 21.500 9.500"/></svg>
<div class="fl" style="top:727.500px">项目结束日期</div><div class="fi" style="top:719px;height:55px;line-height:53px;padding-left:72px;color:#9a9ea6">请选择日期</div>
<svg class="abs" style="left:1214px;top:734px" width="26" height="26" viewBox="0 0 28 28" fill="none" stroke="#8c9099" stroke-width="2"><circle cx="14" cy="14" r="12.500"/><path d="M14 6V14.500H20"/></svg>
<div class="fl" style="top:827.5px"><b>*</b>责任人</div><div class="fi" style="top:820px;height:55px;line-height:53px">请输入责任人</div>
<div class="fl" style="top:929.5px"><b>*</b>项目状态</div><div class="fi" style="top:921px;height:55px;line-height:53px">请选择项目状态</div>
<div class="abs" style="left:1296px;top:118px;width:1601px;height:1380px;background:#fff;box-shadow:-6px 0 52px rgba(0,0,0,.30);clip-path:inset(0 0 0 -110px)"></div>
<div class="abs" style="left:1296px;top:118px;width:188px;height:1380px;background:#f5f5f5"></div>
<div class="abs" style="left:1484px;top:118px;width:4px;height:1380px;background:#e4e7ed"></div>
<div class="abs" style="left:1484px;top:118px;width:4px;height:80px;background:#5b9cf8"></div>
<div class="nav" style="top:139.5px;color:#5b9cf8;">基础设置</div>
<div class="nav" style="top:219.5px;">表单状态</div>
<div class="nav" style="top:299.5px;">业务规则</div>
<div class="nav" style="top:379.5px;">扩展逻辑</div>
<div class="nav" style="top:459.5px;">按钮设置</div>
<div class="nav" style="top:539.5px;">打印模版</div>
<div class="nav" style="top:619.5px;">字段权限</div>
<div class="nav" style="top:699.5px;">高级设置</div>
<div class="t" style="left:1526px;top:140px;font-size:32px;line-height:44px;color:#000">基础设置</div>
<div class="abs" style="left:1526px;top:231px;width:1350px;height:2px;background:#dcdfe6"></div>
<svg class="abs" style="left:2711px;top:143px" width="18" height="18" viewBox="0 0 24 24"><circle cx="12" cy="12" r="12" fill="#000"/><text x="12.300" y="18.500" text-anchor="middle" font-family="Liberation Serif,serif" font-style="italic" font-weight="bold" font-size="19" fill="#fff">i</text></svg><div class="t" style="right:55px;top:138px;font-size:20.500px;line-height:28.500px;text-align:right;color:#111">当前版本: 8.3.0<br>表单版本: 8.3.0</div>
<div class="sl" style="top:300px">主键</div><svg class="abs" style="left:1612px;top:307px" width="25" height="25" viewBox="0 0 24 24"><circle cx="12" cy="12" r="12" fill="#55585e"/><text x="12.300" y="18.500" text-anchor="middle" font-family="Liberation Serif,serif" font-style="italic" font-weight="bold" font-size="19" fill="#fff">i</text></svg><div class="si" style="top:292px;width:1091px">id</div>
<div class="sl" style="top:397px">级联深度</div><svg class="abs" style="left:1556px;top:404px" width="25" height="25" viewBox="0 0 24 24"><circle cx="12" cy="12" r="12" fill="#55585e"/><text x="12.300" y="18.500" text-anchor="middle" font-family="Liberation Serif,serif" font-style="italic" font-weight="bold" font-size="19" fill="#fff">i</text></svg><div class="si" style="top:389px;width:1137px">1</div>
<div class="sl" style="top:494px">标签宽度</div><div class="gear" style="left:1550px;top:496px"><svg width="32" height="32" viewBox="0 0 32 32" fill="none" stroke="#fff" stroke-width="1.700" stroke-linejoin="round"><path d="M13.77 8.11L14.26 5.54L17.74 5.54L18.23 8.11L20.01 8.85L22.16 7.38L24.62 9.84L23.15 11.99L23.89 13.77L26.46 14.26L26.46 17.74L23.89 18.23L23.15 20.01L24.62 22.16L22.16 24.62L20.01 23.15L18.23 23.89L17.74 26.46L14.26 26.46L13.77 23.89L11.99 23.15L9.84 24.62L7.38 22.16L8.85 20.01L8.11 18.23L5.54 17.74L5.54 14.26L8.11 13.77L8.85 11.99L7.38 9.84L9.84 7.38L11.99 8.85Z"/><circle cx="16" cy="16" r="3.600"/></svg></div><div class="si" style="top:485px;width:1023px">100</div>
<div class="sl" style="top:591px">标签对齐</div><div class="gear" style="left:1550px;top:592px"><svg width="32" height="32" viewBox="0 0 32 32" fill="none" stroke="#fff" stroke-width="1.700" stroke-linejoin="round"><path d="M13.77 8.11L14.26 5.54L17.74 5.54L18.23 8.11L20.01 8.85L22.16 7.38L24.62 9.84L23.15 11.99L23.89 13.77L26.46 14.26L26.46 17.74L23.89 18.23L23.15 20.01L24.62 22.16L22.16 24.62L20.01 23.15L18.23 23.89L17.74 26.46L14.26 26.46L13.77 23.89L11.99 23.15L9.84 24.62L7.38 22.16L8.85 20.01L8.11 18.23L5.54 17.74L5.54 14.26L8.11 13.77L8.85 11.99L7.38 9.84L9.84 7.38L11.99 8.85Z"/><circle cx="16" cy="16" r="3.600"/></svg></div><div class="rg" style="top:584.4px"><div style="width:136px">左对齐</div><div style="width:134px" class="on">右对齐</div><div style="width:157.5px">顶部对齐</div></div>
<div class="sl" style="top:691px">表单布局</div><div class="rg" style="top:682.2px"><div style="width:112px" class="on">单列</div><div style="width:110.5px">两列</div><div style="width:110px">三列</div><div style="width:109px">四列</div></div>
<svg class="abs" style="left:1554.500px;top:691.800px" width="28" height="30" viewBox="0 0 28 30" fill="none" stroke="#333" stroke-width="2.200" stroke-linecap="round" stroke-linejoin="round"><path d="M3.500 12A11.500 11.500 0 1 1 3 19.500"/><path d="M3 4V12H11"/></svg>
<div class="sl" style="top:789px">移动端布局</div><div class="rg" style="top:781.2px"><div style="width:112px" class="on">单列</div><div style="width:142.5px">同PC端</div></div>
<div class="sl" style="top:887px">移动端展示</div><div class="abs" style="left:1726px;top:891.500px;width:28px;height:28px;border:2px solid #dcdfe6;border-radius:4px;background:#fff"></div><div class="t" style="left:1774px;top:886.500px;font-size:28px;line-height:40px;color:#444">同PC</div>
<div class="sl" style="top:983px">表单尺寸</div><div class="gear" style="left:1550px;top:985px"><svg width="32" height="32" viewBox="0 0 32 32" fill="none" stroke="#fff" stroke-width="1.700" stroke-linejoin="round"><path d="M13.77 8.11L14.26 5.54L17.74 5.54L18.23 8.11L20.01 8.85L22.16 7.38L24.62 9.84L23.15 11.99L23.89 13.77L26.46 14.26L26.46 17.74L23.89 18.23L23.15 20.01L24.62 22.16L22.16 24.62L20.01 23.15L18.23 23.89L17.74 26.46L14.26 26.46L13.77 23.89L11.99 23.15L9.84 24.62L7.38 22.16L8.85 20.01L8.11 18.23L5.54 17.74L5.54 14.26L8.11 13.77L8.85 11.99L7.38 9.84L9.84 7.38L11.99 8.85Z"/><circle cx="16" cy="16" r="3.600"/></svg></div><div class="rg" style="top:976.2px"><div style="width:112px" class="on">正常</div><div style="width:110.5px">较大</div><div style="width:110px">特大</div><div style="width:134px">超特大</div></div>
<div class="sl" style="top:1082px">显示样式</div><div class="gear" style="left:1550px;top:1083px"><svg width="32" height="32" viewBox="0 0 32 32" fill="none" stroke="#fff" stroke-width="1.700" stroke-linejoin="round"><path d="M13.77 8.11L14.26 5.54L17.74 5.54L18.23 8.11L20.01 8.85L22.16 7.38L24.62 9.84L23.15 11.99L23.89 13.77L26.46 14.26L26.46 17.74L23.89 18.23L23.15 20.01L24.62 22.16L22.16 24.62L20.01 23.15L18.23 23.89L17.74 26.46L14.26 26.46L13.77 23.89L11.99 23.15L9.84 24.62L7.38 22.16L8.85 20.01L8.11 18.23L5.54 17.74L5.54 14.26L8.11 13.77L8.85 11.99L7.38 9.84L9.84 7.38L11.99 8.85Z"/><circle cx="16" cy="16" r="3.600"/></svg></div><div class="abs" style="left:1726px;top:1086px;width:28px;height:28px;border-radius:50%;background:#5b9cf8"></div><div class="abs" style="left:1735.500px;top:1095.500px;width:9px;height:9px;border-radius:50%;background:#fff"></div>
<div class="t" style="left:1773.500px;top:1081.500px;font-size:28px;line-height:40px;color:#5b9cf8">表单</div>
<div class="abs" style="left:2146px;top:1086px;width:28px;height:28px;border-radius:50%;border:2px solid #dcdfe6;background:#fff"></div>
<div class="t" style="left:2194px;top:1081.500px;font-size:28px;line-height:40px;color:#555">表格</div>
<svg class="abs" style="left:1726px;top:1169px" width="366" height="286" viewBox="0 0 366 286"><rect x="1.500" y="1.500" width="363" height="283" fill="#fff" stroke="#5b9cf8" stroke-width="3"/><rect x="4" y="4" width="358" height="278" fill="none" stroke="#e6e6e6" stroke-width="1.500"/><rect x="102.7" y="23.4" width="235.8" height="30.0" fill="#fff" stroke="#e4e4e4" stroke-width="1.500"/><rect x="33.5" y="34.2" width="45.1" height="8.4" fill="#dedede"/><rect x="123.7" y="34.2" width="163.5" height="8.4" fill="#f3f3f3"/><rect x="102.7" y="65.5" width="235.8" height="30.0" fill="#fff" stroke="#e4e4e4" stroke-width="1.500"/><rect x="44.0" y="76.3" width="34.6" height="8.4" fill="#dedede"/><rect x="123.7" y="76.3" width="130.7" height="8.4" fill="#f3f3f3"/><rect x="102.7" y="107.5" width="235.8" height="30.0" fill="#fff" stroke="#e4e4e4" stroke-width="1.500"/><rect x="37.7" y="118.4" width="40.9" height="8.4" fill="#dedede"/><rect x="123.7" y="118.4" width="130.7" height="8.4" fill="#f3f3f3"/><rect x="102.7" y="149.6" width="235.8" height="30.0" fill="#fff" stroke="#e4e4e4" stroke-width="1.500"/><rect x="47.9" y="160.4" width="30.7" height="8.4" fill="#dedede"/><rect x="123.7" y="160.4" width="148.8" height="8.4" fill="#f3f3f3"/><rect x="102.7" y="191.7" width="235.8" height="30.0" fill="#fff" stroke="#e4e4e4" stroke-width="1.500"/><rect x="44.0" y="202.5" width="34.6" height="8.4" fill="#dedede"/><rect x="123.7" y="202.5" width="83.5" height="8.4" fill="#f3f3f3"/><rect x="102.7" y="233.8" width="235.8" height="30.0" fill="#fff" stroke="#e4e4e4" stroke-width="1.500"/><rect x="39.8" y="244.6" width="38.8" height="8.4" fill="#dedede"/><rect x="123.7" y="244.6" width="130.7" height="8.4" fill="#f3f3f3"/></svg>
<svg class="abs" style="left:2140px;top:1175px" width="360" height="280" viewBox="0 0 360 280"><rect x="1" y="1" width="358" height="278" fill="#fff" stroke="#e6e6e6" stroke-width="1.500"/><rect x="9.4" y="15.7" width="81.1" height="253.3" fill="#f9f9f9"/><path d="M90.5 15.7V269.0" stroke="#e0e0e0" stroke-width="1.500"/><path d="M9.4 16.1H351.2" stroke="#e4e4e4" stroke-width="1.500"/><path d="M9.4 55.9H351.2" stroke="#e4e4e4" stroke-width="1.500"/><path d="M9.4 99.9H351.2" stroke="#e4e4e4" stroke-width="1.500"/><path d="M9.4 139.8H351.2" stroke="#e4e4e4" stroke-width="1.500"/><path d="M9.4 183.8H351.2" stroke="#e4e4e4" stroke-width="1.500"/><path d="M9.4 224.0H351.2" stroke="#e4e4e4" stroke-width="1.500"/><rect x="30.0" y="31.4" width="45.1" height="8.4" fill="#dedede"/><rect x="120.2" y="31.4" width="163.5" height="8.4" fill="#f3f3f3"/><rect x="40.5" y="73.4" width="34.6" height="8.4" fill="#dedede"/><rect x="120.2" y="73.4" width="131.0" height="8.4" fill="#f3f3f3"/><rect x="34.2" y="115.7" width="40.9" height="8.4" fill="#dedede"/><rect x="120.2" y="115.7" width="131.0" height="8.4" fill="#f3f3f3"/><rect x="44.4" y="157.6" width="30.7" height="8.4" fill="#dedede"/><rect x="120.2" y="157.6" width="149.2" height="8.4" fill="#f3f3f3"/><rect x="40.5" y="199.9" width="34.6" height="8.4" fill="#dedede"/><rect x="120.2" y="199.9" width="83.5" height="8.4" fill="#f3f3f3"/><rect x="36.3" y="242.1" width="38.8" height="8.4" fill="#dedede"/><rect x="120.2" y="242.1" width="131.0" height="8.4" fill="#f3f3f3"/></svg>
<svg class="abs" style="left:2047px;top:1450px" width="24" height="16" viewBox="0 0 24 16" fill="none" stroke="#5b9cf8" stroke-width="1.600"><path d="M1 8C4 3 8 1 12 1s8 2 11 7c-3 5-7 7-11 7S4 13 1 8Z"/><circle cx="12" cy="8" r="4.200"/></svg>
<div class="t" style="left:2078px;top:1438px;font-size:24px;line-height:40px;color:#5b9cf8">查看Api</div>
<div class="abs" style="left:2864px;top:549px;width:12px;height:925px;background:#e5e5e5"></div>
<div class="abs" style="left:967px;top:1496px;width:1929px;height:2px;background:#ededed"></div>
<div class="tip" style="left:1196px;top:579px;width:284px;height:76px;line-height:82px">跟随首选项<i style="top:10px"></i></div>
<div class="tip" style="left:1201px;top:687px;width:283px;height:76px;line-height:82px">恢复首选项<i style="top:10px"></i></div>
<div class="dot" style="left:1502px;top:593px"></div><div class="dot" style="left:1506px;top:701px"></div>
<div class="rr" style="left:1535px;top:577px;width:59px;height:63px"></div><div class="rr" style="left:1539px;top:675px;width:51px;height:64px"></div>
<div class="abs" style="left:2896px;top:58px;width:2px;height:1490px;background:#c4c4c4"></div>
<div class="abs" style="left:2898px;top:58px;width:32px;height:1489px;background:#f2f2f2"></div>
<div class="rsep" style="top:221px"></div><div class="rsep" style="top:417px"></div><div class="rsep" style="top:614px"></div><div class="rsep" style="top:833px"></div>
<div class="rb" style="top:70px">数<br>据<br>源</div>
<div class="rb" style="top:234px">离<br>线<br>资<br>源</div>
<div class="rb" style="top:430px">三<br>方<br>服<br>务</div>
<div class="rb" style="top:628px">命<br>名<br><span style="display:block;line-height:31px">S</span><span style="display:block;line-height:29px">q</span><span style="display:block;line-height:28px">l</span></div>
</body></html>
